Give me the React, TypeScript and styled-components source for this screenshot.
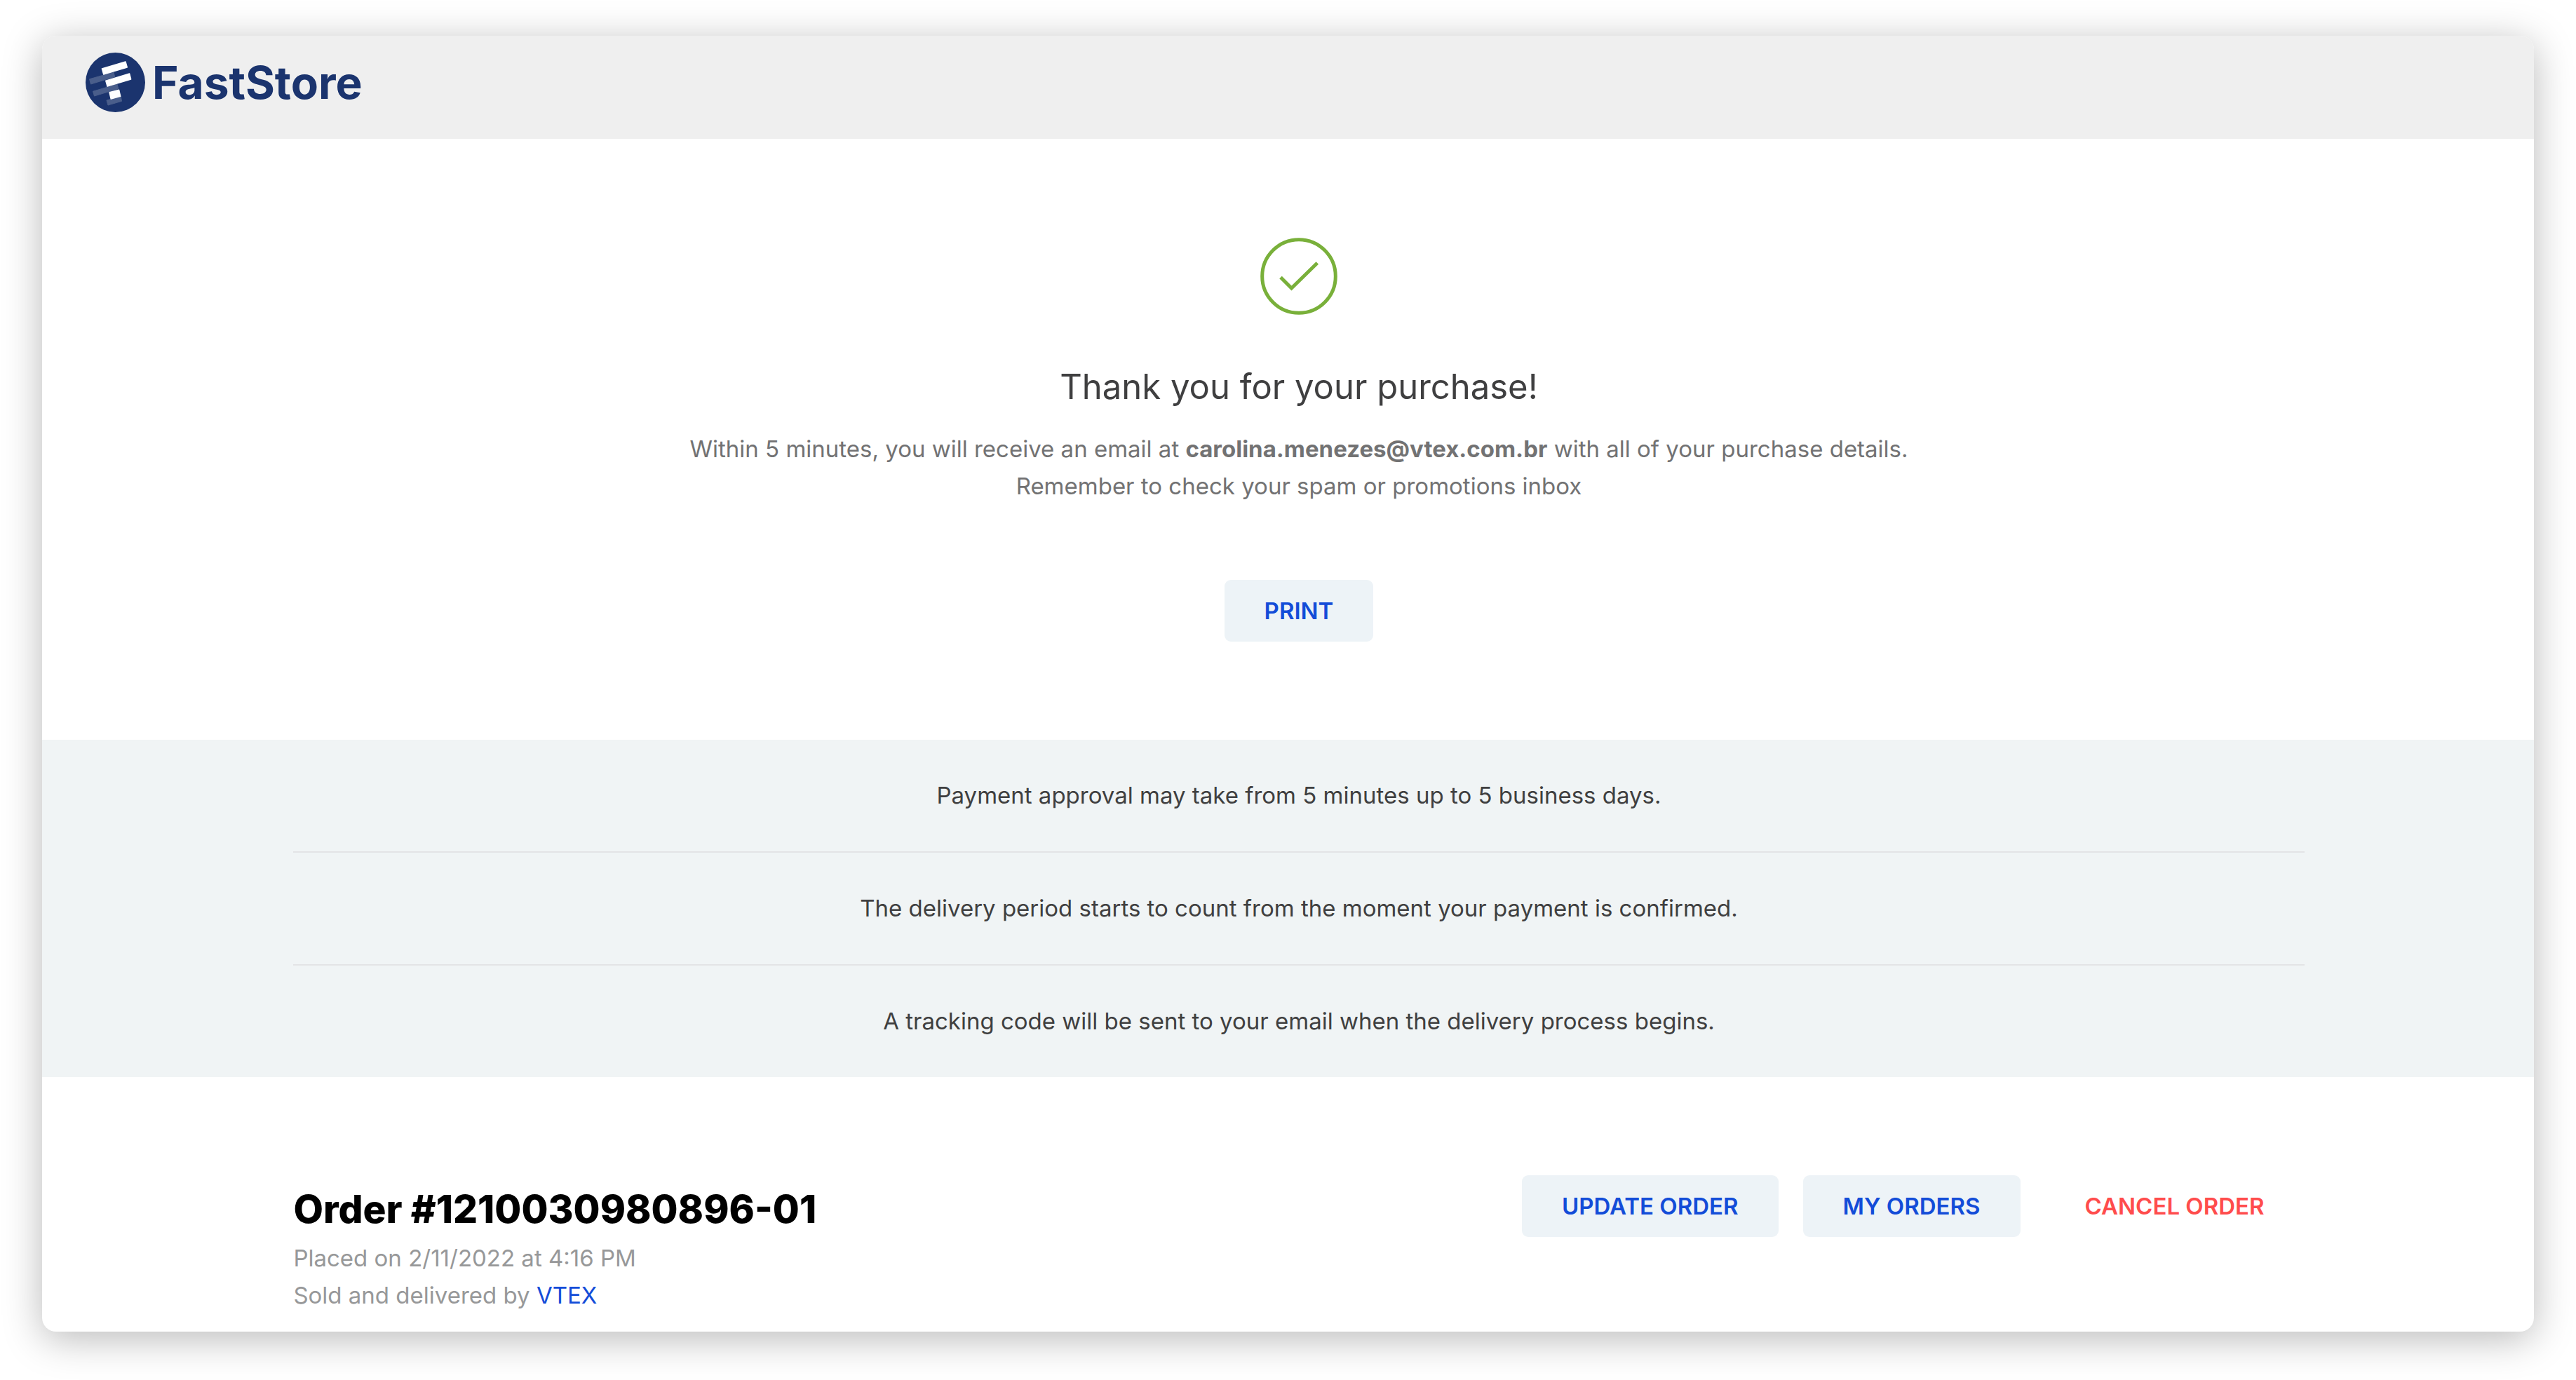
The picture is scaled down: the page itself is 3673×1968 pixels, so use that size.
import React from "react";
import styled, { createGlobalStyle } from "styled-components";

const colors = {
  action: "#134cd8",
  actionSoft: "#edf3f7",
  danger: "#ff4c4c",
  success: "#79b03a",
  brand: "#1b346e",
  brandSoft: "#4a5e8b",
  text: "#3f3f40",
  muted: "#727273",
  faint: "#979899",
};

const GlobalStyle = createGlobalStyle`
  *, *::before, *::after { box-sizing: border-box; }
  body {
    margin: 0;
    background: #fff;
    color: ${colors.text};
    font-family: Inter, "Open Sans", sans-serif;
    font-size: 33px;
    line-height: 53px;
  }
  h1, h2, p, ul { margin: 0; padding: 0; }
`;

const Page = styled.div`
  display: flex;
  min-height: 100vh;
  padding: 51px 60px 69px;
`;

const Window = styled.div`
  flex: 1;
  min-width: 0;
  overflow: hidden;
  border-radius: 20px;
  background: #fff;
  box-shadow: 0 10px 56px rgba(0, 0, 0, 0.28);
`;

const Viewport = styled.div`
  width: calc(100% + 31px);
`;

const Header = styled.header`
  display: flex;
  align-items: center;
  height: 147px;
  padding: 0 62px 14px;
  background: #efefef;
`;

const Brand = styled.a`
  display: flex;
  align-items: center;
  gap: 10px;
  color: ${colors.brand};
  font-size: 64px;
  font-weight: 700;
  line-height: 85px;
  text-decoration: none;
`;

const Hero = styled.section`
  display: flex;
  flex-direction: column;
  align-items: center;
  padding: 141px 10% 140px;
  text-align: center;
`;

const HeroTitle = styled.h1`
  margin: 70px 0 29px;
  font-size: 49px;
  font-weight: 400;
  line-height: 66px;
`;

const HeroText = styled.p`
  margin-bottom: 107px;
  color: ${colors.muted};
`;

const Button = styled.button<{ $tone?: "soft" | "danger" }>`
  height: 88px;
  padding: 0 57px;
  border: 0;
  border-radius: 9px;
  background: ${({ $tone }) => ($tone === "danger" ? "transparent" : colors.actionSoft)};
  color: ${({ $tone }) => ($tone === "danger" ? colors.danger : colors.action)};
  font: inherit;
  font-weight: 600;
  text-transform: uppercase;
  white-space: nowrap;
  cursor: pointer;
`;

const Notices = styled.ul`
  padding: 0 10%;
  background: #f0f4f5;
  list-style: none;
`;

const Notice = styled.li`
  padding: 53px 0;
  text-align: center;

  & + & {
    border-top: 2px solid #e3e4e6;
  }
`;

const Order = styled.section`
  display: flex;
  align-items: flex-start;
  justify-content: space-between;
  padding: 140px 10% 24px;
`;

const OrderTitle = styled.h2`
  padding-top: 4px;
  color: #000;
  font-size: 55px;
  font-weight: 800;
  line-height: 88px;
`;

const OrderMeta = styled.p`
  color: ${colors.faint};
`;

const Seller = styled.a`
  color: ${colors.action};
  text-decoration: none;
`;

const Actions = styled.div`
  display: flex;
  gap: 35px;
`;

const LogoMark = () => (
  <svg width="85" height="85" viewBox="0 0 85 85" aria-hidden="true">
    <circle cx="42.5" cy="42.5" r="42.5" fill={colors.brand} />
    <g fill={colors.brandSoft} stroke={colors.brandSoft} strokeWidth="1" strokeLinejoin="round">
      <path d="M5.5 37.8 40 28 41.7 34.5 7.5 45Z" />
      <path d="M10.5 55.3 45 45 46.8 51.5 12.5 62Z" />
      <path d="M30 68 50.3 62.5 51.5 69.3 32 75Z" />
    </g>
    <g fill="#fff" stroke="#fff" strokeWidth="1.4" strokeLinejoin="round">
      <path d="M23.4 23 57 13 59.3 21 25.7 31Z" />
      <path d="M28.8 40.2 62.6 30 64.7 38 31.1 48.2Z" />
      <path d="M34 56.8 47.6 53.2 49.8 62.3 36.2 66Z" />
    </g>
  </svg>
);

const SuccessIcon = () => (
  <svg width="110" height="110" viewBox="0 0 110 110" fill="none" stroke={colors.success} strokeWidth="5" role="img" aria-label="Success">
    <circle cx="55" cy="55" r="52.3" />
    <path d="M29 56.5 44.5 72 81.3 36" />
  </svg>
);

const notices = [
  "Payment approval may take from 5 minutes up to 5 business days.",
  "The delivery period starts to count from the moment your payment is confirmed.",
  "A tracking code will be sent to your email when the delivery process begins.",
];

export default function App() {
  return (
    <>
      <GlobalStyle />
      <Page>
        <Window>
          <Viewport>
            <Header>
              <Brand href="#">
                <LogoMark />
                FastStore
              </Brand>
            </Header>
            <main>
              <Hero>
                <SuccessIcon />
                <HeroTitle>Thank you for your purchase!</HeroTitle>
                <HeroText>
                  Within 5 minutes, you will receive an email at <strong>carolina.menezes@vtex.com.br</strong> with all of your purchase details.
                  <br />
                  Remember to check your spam or promotions inbox
                </HeroText>
                <Button type="button">Print</Button>
              </Hero>
              <Notices>
                {notices.map((notice) => (
                  <Notice key={notice}>{notice}</Notice>
                ))}
              </Notices>
              <Order>
                <div>
                  <OrderTitle>Order #1210030980896-01</OrderTitle>
                  <OrderMeta>Placed on 2/11/2022 at 4:16 PM</OrderMeta>
                  <OrderMeta>
                    Sold and delivered by <Seller href="#">VTEX</Seller>
                  </OrderMeta>
                </div>
                <Actions>
                  <Button type="button">Update order</Button>
                  <Button type="button">My orders</Button>
                  <Button type="button" $tone="danger">Cancel order</Button>
                </Actions>
              </Order>
            </main>
          </Viewport>
        </Window>
      </Page>
    </>
  );
}
